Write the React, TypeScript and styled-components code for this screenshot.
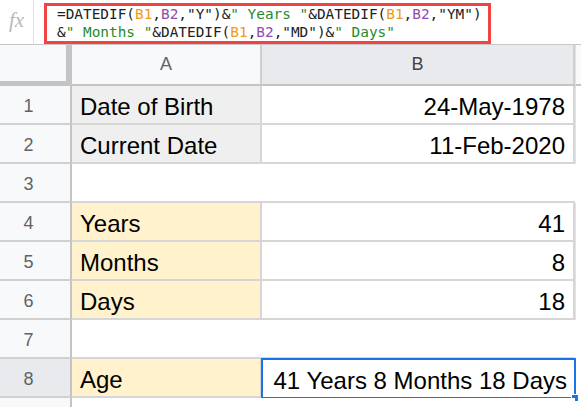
import React from 'react';
import styled, { createGlobalStyle, css } from 'styled-components';

const Global = createGlobalStyle`
  html, body {
    margin: 0;
    padding: 0;
    background: #ffffff;
    overflow: hidden;
  }
`;

const Page = styled.div`
  width: 581px;
  height: 407px;
  display: flex;
  flex-direction: column;
  overflow: hidden;
  background: #ffffff;
`;

const FormulaBar = styled.div`
  height: 45px;
  flex: none;
  display: flex;
  box-sizing: border-box;
  border-bottom: 1px solid #c7c7c7;
  background: #ffffff;
`;

const FxBox = styled.div`
  width: 34px;
  flex: none;
  box-sizing: border-box;
  border-right: 1px solid #e3e3e3;
  display: flex;
  align-items: center;
  justify-content: center;
  font-family: 'Liberation Serif', serif;
  font-style: italic;
  font-size: 21px;
  color: #b9b9b9;
  padding-bottom: 3px;
`;

const FormulaBox = styled.div`
  margin: 3px 0 0 10px;
  width: 447px;
  height: 41px;
  box-sizing: border-box;
  border: 3px solid #f04343;
  padding: 0 0 0 10px;
  font-family: 'DejaVu Sans Mono', 'Liberation Mono', monospace;
  font-size: 14.4px;
  line-height: 17.5px;
  color: #202124;
  white-space: pre;
  overflow: visible;
`;

const Tok = styled.span<{ $k: 'ref1' | 'ref2' | 'str' }>`
  color: ${(p) => (p.$k === 'ref1' ? '#f09a1a' : p.$k === 'ref2' ? '#8e4db0' : '#1e8a2e')};
`;

const Sheet = styled.div`
  flex: 1;
  display: grid;
  grid-template-columns: 72px 190px 313px 1fr;
  grid-template-rows: 41px repeat(9, 39px);
  font-family: 'Liberation Sans', Arial, sans-serif;
`;

const Corner = styled.div`
  box-sizing: border-box;
  background: #f8f9fa;
  border-right: 6px solid #c4c4c4;
  border-bottom: 5px solid #c4c4c4;
`;

const ColHead = styled.div<{ $active?: boolean; $edge?: boolean }>`
  box-sizing: border-box;
  display: flex;
  align-items: center;
  justify-content: center;
  font-size: 18px;
  color: ${(p) => (p.$active ? '#444' : '#5f6368')};
  background: ${(p) => (p.$active ? '#e8eaed' : '#f8f9fa')};
  border-bottom: 2px solid #c4c4c4;
  border-right: ${(p) => (p.$edge ? 'none' : '2px solid #cfcfcf')};
`;

const RowHead = styled.div<{ $active?: boolean }>`
  box-sizing: border-box;
  display: flex;
  align-items: center;
  justify-content: center;
  padding: 4px 13px 0 0;
  font-size: 18px;
  color: #5f6368;
  background: ${(p) => (p.$active ? '#e8eaed' : '#f8f9fa')};
  border-right: 2px solid #c4c4c4;
  border-bottom: 2px solid #d0d0d0;
`;

type Fill = 'none' | 'gray' | 'yellow';

const fills: Record<Fill, string> = {
  none: '#ffffff',
  gray: '#efefef',
  yellow: '#fff2cc',
};

const Cell = styled.div<{ $fill?: Fill; $right?: boolean; $line?: boolean; $bottom?: boolean }>`
  position: relative;
  box-sizing: border-box;
  display: flex;
  align-items: center;
  justify-content: ${(p) => (p.$right ? 'flex-end' : 'flex-start')};
  padding: 4px 8px 0 8px;
  font-size: 24px;
  color: #000000;
  white-space: nowrap;
  background: ${(p) => fills[p.$fill ?? 'none']};
  ${(p) =>
    p.$line &&
    css`
      border-right: 2px solid #d6d6d6;
    `}
  ${(p) =>
    p.$bottom !== false &&
    css`
      border-bottom: 2px solid #d6d6d6;
    `}
`;

const Edge = styled.div<{ $head?: boolean; $line?: boolean }>`
  box-sizing: border-box;
  background: ${(p) => (p.$head ? '#f8f9fa' : '#ffffff')};
  border-left: ${(p) => (p.$line ? '1px solid #e2e2e2' : 'none')};
  border-bottom: ${(p) => (p.$head ? '2px solid #c4c4c4' : 'none')};
`;

const Selection = styled.div`
  position: absolute;
  left: -1px;
  top: -1px;
  right: -1px;
  bottom: -1px;
  border: 2px solid #1a73e8;
  pointer-events: none;
`;

const Handle = styled.div`
  position: absolute;
  right: -5px;
  bottom: -5px;
  width: 6px;
  height: 6px;
  background: #1a73e8;
  border: 1px solid #ffffff;
`;

type Row = {
  n: number;
  a?: string;
  b?: string;
  fill?: Fill;
  empty?: boolean;
};

const rows: Row[] = [
  { n: 1, a: 'Date of Birth', b: '24-May-1978', fill: 'gray' },
  { n: 2, a: 'Current Date', b: '11-Feb-2020', fill: 'gray' },
  { n: 3, empty: true },
  { n: 4, a: 'Years', b: '41', fill: 'yellow' },
  { n: 5, a: 'Months', b: '8', fill: 'yellow' },
  { n: 6, a: 'Days', b: '18', fill: 'yellow' },
  { n: 7, empty: true },
  { n: 8, a: 'Age', b: '41 Years 8 Months 18 Days', fill: 'yellow' },
];

const App: React.FC = () => {
  return (
    <Page>
      <Global />
      <FormulaBar>
        <FxBox>fx</FxBox>
        <FormulaBox>
          {'=DATEDIF('}
          <Tok $k="ref1">B1</Tok>,<Tok $k="ref2">B2</Tok>
          {',"Y")&'}
          <Tok $k="str">{'" Years "'}</Tok>
          {'&DATEDIF('}
          <Tok $k="ref1">B1</Tok>,<Tok $k="ref2">B2</Tok>
          {',"YM")\n&'}
          <Tok $k="str">{'" Months "'}</Tok>
          {'&DATEDIF('}
          <Tok $k="ref1">B1</Tok>,<Tok $k="ref2">B2</Tok>
          {',"MD")&'}
          <Tok $k="str">{'" Days"'}</Tok>
        </FormulaBox>
      </FormulaBar>
      <Sheet>
        <Corner />
        <ColHead>A</ColHead>
        <ColHead $active>B</ColHead>
        <Edge $head $line />

        {rows.map((r) => (
          <React.Fragment key={r.n}>
            <RowHead $active={r.n === 8}>{r.n}</RowHead>
            {r.empty ? (
              <>
                <Cell />
                <Cell />
                <Edge />
              </>
            ) : (
              <>
                <Cell $fill={r.fill} $line>
                  {r.a}
                </Cell>
                <Cell $right $line={r.n !== 8} $bottom={r.n !== 8}>
                  {r.b}
                  {r.n === 8 && (
                    <Selection>
                      <Handle />
                    </Selection>
                  )}
                </Cell>
                <Edge $line />
              </>
            )}
          </React.Fragment>
        ))}

        <RowHead />
        <Cell $bottom={false} />
        <Cell $bottom={false} />
        <Edge />
      </Sheet>
    </Page>
  );
};

export default App;
